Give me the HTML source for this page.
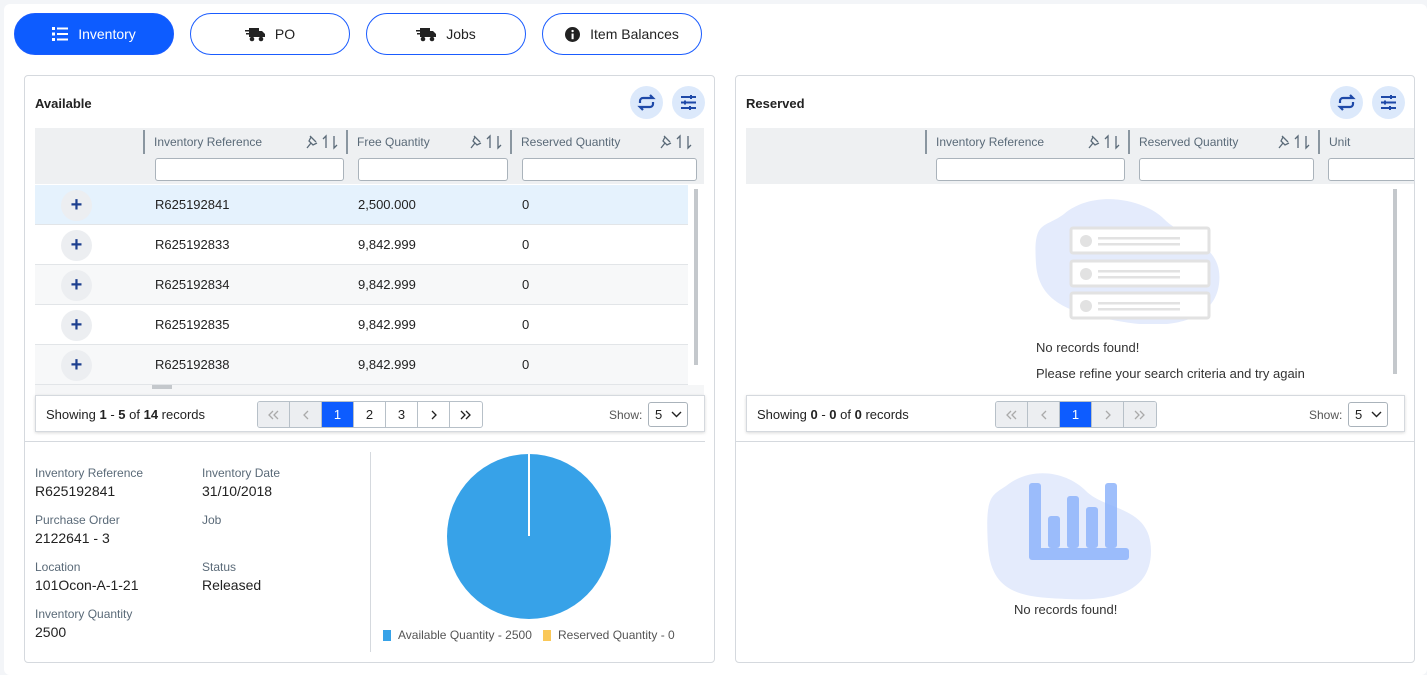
<!DOCTYPE html>
<html><head><style>
*{box-sizing:border-box;margin:0;padding:0}
body{width:1427px;height:675px;background:#f3f5f8;font-family:"Liberation Sans",sans-serif;position:relative;overflow:hidden;color:#222}
.main{position:absolute;left:4px;top:4px;width:1423px;height:671px;background:#fff;border-radius:6px}
.a{position:absolute}
.btn{position:absolute;top:13px;width:160px;height:42px;border:1px solid #1a5cff;border-radius:21px;background:#fff;font-size:14px;display:flex;align-items:center;justify-content:center;gap:10px;color:#222}
.btn.on{background:#0d5cff;color:#fff}
.panel{position:absolute;top:75px;height:588px;border:1px solid #d5d9de;border-radius:4px;background:#fff;overflow:hidden}
.title{position:absolute;left:10px;top:20px;font-size:13px;font-weight:bold;color:#222}
.cb{position:absolute;top:10px;width:33px;height:33px;border-radius:50%;background:#dce9fb}
.th{position:absolute;top:52px;height:56px;background:#eef0f2}
.col{position:absolute;top:2px;height:24px;border-left:2px solid #8a96a0;font-size:12px;color:#5a6a78;padding:5px 0 0 9px}
.ic{position:absolute;right:6px;top:4px}
.inp{position:absolute;top:30px;height:23px;border:1px solid #aab3bb;border-radius:3px;background:#fff}
.row{position:absolute;left:10px;width:653px;height:40px;border-bottom:1px solid #e2e5e8;font-size:13px}
.row span{position:absolute;top:12px}
.plus{position:absolute;left:26px;top:5px;width:31px;height:31px;border-radius:50%;background:#eceef1;color:#1d3f8f;font-weight:bold;font-size:20px;text-align:center;line-height:30px}
.pg{position:absolute;height:37px;border:1px solid #d5d9de;box-shadow:0 1px 3px rgba(0,0,0,.15);background:#fff;font-size:13px}
.pb{position:absolute;top:5px;height:27px;display:flex;border:1px solid #b7c0c8;border-radius:3px;overflow:hidden}
.pb div{width:32px;border-right:1px solid #b7c0c8;text-align:center;line-height:25px;font-size:13px;display:flex;align-items:center;justify-content:center}
.pb div:last-child{border-right:none}
.lbl{position:absolute;font-size:12px;color:#5a6a78}
.val{position:absolute;font-size:14px;color:#222}
</style></head><body>
<div class="main"></div>
<div class="btn on" style="left:14px"><svg width="16" height="14" viewBox="0 0 16 14" fill="#fff"><rect x="0" y="0" width="3" height="3"/><rect x="5" y="0.5" width="11" height="2"/><rect x="0" y="5.5" width="3" height="3"/><rect x="5" y="6" width="11" height="2"/><rect x="0" y="11" width="3" height="3"/><rect x="5" y="11.5" width="11" height="2"/></svg>Inventory</div>
<div class="btn" style="left:190px"><svg width="20" height="16" viewBox="0 0 20 16" fill="#222"><rect x="4" y="2" width="10" height="9"/><path d="M14 5h3l3 3v3h-6z"/><circle cx="7" cy="13" r="2.3"/><circle cx="16" cy="13" r="2.3"/><rect x="0" y="4" width="4" height="1.5"/><rect x="1" y="7" width="3" height="1.5"/></svg>PO</div>
<div class="btn" style="left:366px"><svg width="20" height="16" viewBox="0 0 20 16" fill="#222"><rect x="4" y="2" width="10" height="9"/><path d="M14 5h3l3 3v3h-6z"/><circle cx="7" cy="13" r="2.3"/><circle cx="16" cy="13" r="2.3"/><rect x="0" y="4" width="4" height="1.5"/><rect x="1" y="7" width="3" height="1.5"/></svg>Jobs</div>
<div class="btn" style="left:542px"><svg width="15" height="15" viewBox="0 0 16 16"><circle cx="8" cy="8" r="8" fill="#222"/><rect x="7" y="7" width="2.2" height="6" fill="#fff"/><circle cx="8.1" cy="4.3" r="1.3" fill="#fff"/></svg>Item Balances</div>

<!-- LEFT PANEL -->
<div class="panel" style="left:24px;width:691px">
 <div class="title">Available</div>
 <div class="cb" style="left:605px"><svg width="33" height="33" viewBox="0 0 33 33" fill="none" stroke="#1e49a8" stroke-width="2.2"><path d="M10 17v-2a3 3 0 0 1 3-3h10l-3-3M23 16v2a3 3 0 0 1-3 3H10l3 3"/></svg></div>
 <div class="cb" style="left:647px"><svg width="33" height="33" viewBox="0 0 33 33" stroke="#1e49a8" stroke-width="2"><path d="M9 11h15M9 16.5h15M9 22h15"/><path d="M19 9v4M13 14.5v4M18 20v4"/></svg></div>
 <div class="th" style="left:10px;width:669px">
  <div class="col" style="left:108px;width:203px">Inventory Reference<svg class="ic" width="36" height="16" viewBox="0 0 36 16" fill="none" stroke="#5a6a78" stroke-width="1.3"><path d="M6 2l6 6M7 3l-2 4 4 4 4-2M7 9l-4 5"/><path d="M22 14V2l-3 3M30 2v12l3-3"/></svg></div>
  <div class="col" style="left:311px;width:164px">Free Quantity<svg class="ic" width="36" height="16" viewBox="0 0 36 16" fill="none" stroke="#5a6a78" stroke-width="1.3"><path d="M6 2l6 6M7 3l-2 4 4 4 4-2M7 9l-4 5"/><path d="M22 14V2l-3 3M30 2v12l3-3"/></svg></div>
  <div class="col" style="left:475px;width:190px">Reserved Quantity<svg class="ic" width="36" height="16" viewBox="0 0 36 16" fill="none" stroke="#5a6a78" stroke-width="1.3"><path d="M6 2l6 6M7 3l-2 4 4 4 4-2M7 9l-4 5"/><path d="M22 14V2l-3 3M30 2v12l3-3"/></svg></div>
  <div class="inp" style="left:120px;width:189px"></div>
  <div class="inp" style="left:323px;width:150px"></div>
  <div class="inp" style="left:487px;width:175px"></div>
 </div>
 <div class="row" style="top:109px;background:#e5f2fd"><div class="plus">+</div><span style="left:120px">R625192841</span><span style="left:323px">2,500.000</span><span style="left:487px">0</span></div>
 <div class="row" style="top:149px"><div class="plus">+</div><span style="left:120px">R625192833</span><span style="left:323px">9,842.999</span><span style="left:487px">0</span></div>
 <div class="row" style="top:189px;background:#f7f8f9"><div class="plus">+</div><span style="left:120px">R625192834</span><span style="left:323px">9,842.999</span><span style="left:487px">0</span></div>
 <div class="row" style="top:229px"><div class="plus">+</div><span style="left:120px">R625192835</span><span style="left:323px">9,842.999</span><span style="left:487px">0</span></div>
 <div class="row" style="top:269px;background:#f7f8f9"><div class="plus">+</div><span style="left:120px">R625192838</span><span style="left:323px">9,842.999</span><span style="left:487px">0</span></div>
 <div class="a" style="left:10px;top:309px;width:669px;height:10px;background:#f5f6f7"></div>
 <div class="a" style="left:127px;top:309px;width:20px;height:4px;background:#c4c8cc"></div>
 <div class="a" style="left:669px;top:113px;width:4px;height:176px;background:#c4c8cc"></div>
 <div class="pg" style="left:10px;top:319px;width:670px">
  <span class="a" style="left:10px;top:11px">Showing <b>1</b> - <b>5</b> of <b>14</b> records</span>
  <div class="pb" style="left:221px"><div style="background:#eceef1"><svg width="12" height="10" viewBox="0 0 12 10" fill="none" stroke="#aaa" stroke-width="1.3"><path d="M5 1L1 5l4 4M10 1L6 5l4 4"/></svg></div><div style="background:#eceef1"><svg width="6" height="10" viewBox="0 0 6 10" fill="none" stroke="#aaa" stroke-width="1.3"><path d="M5 1L1 5l4 4"/></svg></div><div style="background:#0d5cff;color:#fff">1</div><div>2</div><div>3</div><div><svg width="6" height="10" viewBox="0 0 6 10" fill="none" stroke="#222" stroke-width="1.3"><path d="M1 1l4 4-4 4"/></svg></div><div><svg width="12" height="10" viewBox="0 0 12 10" fill="none" stroke="#222" stroke-width="1.3"><path d="M1 1l4 4-4 4M6 1l4 4-4 4"/></svg></div></div>
  <span class="a" style="left:573px;top:12px;font-size:12px;color:#555">Show:</span>
  <div class="a" style="left:612px;top:6px;width:40px;height:25px;border:1px solid #aab3bb;border-radius:3px;padding:4px 0 0 6px">5<svg style="position:absolute;right:5px;top:8px" width="11" height="7" viewBox="0 0 11 7" fill="none" stroke="#222" stroke-width="1.4"><path d="M1 1l4.5 4.5L10 1"/></svg></div>
 </div>
 <div class="a" style="left:0;top:365px;width:680px;height:1px;background:#d5d9de"></div>
 <div class="lbl" style="left:10px;top:390px">Inventory Reference</div><div class="val" style="left:10px;top:407px">R625192841</div>
 <div class="lbl" style="left:177px;top:390px">Inventory Date</div><div class="val" style="left:177px;top:407px">31/10/2018</div>
 <div class="lbl" style="left:10px;top:437px">Purchase Order</div><div class="val" style="left:10px;top:454px">2122641 - 3</div>
 <div class="lbl" style="left:177px;top:437px">Job</div>
 <div class="lbl" style="left:10px;top:484px">Location</div><div class="val" style="left:10px;top:501px">101Ocon-A-1-21</div>
 <div class="lbl" style="left:177px;top:484px">Status</div><div class="val" style="left:177px;top:501px">Released</div>
 <div class="lbl" style="left:10px;top:531px">Inventory Quantity</div><div class="val" style="left:10px;top:548px">2500</div>
 <div class="a" style="left:345px;top:376px;width:1px;height:200px;background:#d5d9de"></div>
 <div class="a" style="left:422px;top:378px;width:164px;height:165px;border-radius:50%;background:#37a2e8"></div>
 <div class="a" style="left:503px;top:378px;width:2px;height:82px;background:#fff"></div>
 <div class="a" style="left:358px;top:554px;width:8px;height:11px;background:#37a2e8"></div>
 <div class="a" style="left:373px;top:552px;font-size:12px;color:#555">Available Quantity - 2500</div>
 <div class="a" style="left:518px;top:554px;width:8px;height:11px;background:#fac858"></div>
 <div class="a" style="left:533px;top:552px;font-size:12px;color:#555">Reserved Quantity - 0</div>
</div>

<!-- RIGHT PANEL -->
<div class="panel" style="left:735px;width:680px">
 <div class="title">Reserved</div>
 <div class="cb" style="left:594px"><svg width="33" height="33" viewBox="0 0 33 33" fill="none" stroke="#1e49a8" stroke-width="2.2"><path d="M10 17v-2a3 3 0 0 1 3-3h10l-3-3M23 16v2a3 3 0 0 1-3 3H10l3 3"/></svg></div>
 <div class="cb" style="left:636px"><svg width="33" height="33" viewBox="0 0 33 33" stroke="#1e49a8" stroke-width="2"><path d="M9 11h15M9 16.5h15M9 22h15"/><path d="M19 9v4M13 14.5v4M18 20v4"/></svg></div>
 <div class="th" style="left:10px;width:669px">
  <div class="col" style="left:179px;width:203px">Inventory Reference<svg class="ic" width="36" height="16" viewBox="0 0 36 16" fill="none" stroke="#5a6a78" stroke-width="1.3"><path d="M6 2l6 6M7 3l-2 4 4 4 4-2M7 9l-4 5"/><path d="M22 14V2l-3 3M30 2v12l3-3"/></svg></div>
  <div class="col" style="left:382px;width:190px">Reserved Quantity<svg class="ic" width="36" height="16" viewBox="0 0 36 16" fill="none" stroke="#5a6a78" stroke-width="1.3"><path d="M6 2l6 6M7 3l-2 4 4 4 4-2M7 9l-4 5"/><path d="M22 14V2l-3 3M30 2v12l3-3"/></svg></div>
  <div class="col" style="left:572px;width:97px">Unit</div>
  <div class="inp" style="left:190px;width:189px"></div>
  <div class="inp" style="left:393px;width:175px"></div>
  <div class="inp" style="left:582px;width:100px"></div>
 </div>
 <div class="a" style="left:657px;top:113px;width:4px;height:185px;background:#c4c8cc"></div>
 <svg class="a" style="left:298px;top:118px" width="190" height="130" viewBox="0 0 190 130">
  <path d="M30 20C60 -5 110 5 130 25S190 50 185 90S130 135 90 128S5 115 2 70S10 35 30 20Z" fill="#e4ebfc"/>
  <g fill="#fff" stroke="#e2e2e2" stroke-width="3"><rect x="37" y="34" width="138" height="25" rx="2"/><rect x="37" y="67" width="138" height="25" rx="2"/><rect x="37" y="99" width="138" height="25" rx="2"/></g>
  <g fill="#e2e2e2"><circle cx="52" cy="47" r="6"/><circle cx="52" cy="80" r="6"/><circle cx="52" cy="112" r="6"/><rect x="64" y="43" width="82" height="2.5"/><rect x="64" y="49" width="82" height="2.5"/><rect x="64" y="76" width="82" height="2.5"/><rect x="64" y="82" width="82" height="2.5"/><rect x="64" y="108" width="82" height="2.5"/><rect x="64" y="114" width="82" height="2.5"/></g>
 </svg>
 <div class="a" style="left:300px;top:264px;font-size:13px;color:#333">No records found!</div>
 <div class="a" style="left:300px;top:290px;font-size:13px;color:#333">Please refine your search criteria and try again</div>
 <div class="pg" style="left:10px;top:319px;width:659px">
  <span class="a" style="left:10px;top:11px">Showing <b>0</b> - <b>0</b> of <b>0</b> records</span>
  <div class="pb" style="left:248px"><div style="background:#eceef1"><svg width="12" height="10" viewBox="0 0 12 10" fill="none" stroke="#aaa" stroke-width="1.3"><path d="M5 1L1 5l4 4M10 1L6 5l4 4"/></svg></div><div style="background:#eceef1"><svg width="6" height="10" viewBox="0 0 6 10" fill="none" stroke="#aaa" stroke-width="1.3"><path d="M5 1L1 5l4 4"/></svg></div><div style="background:#0d5cff;color:#fff">1</div><div style="background:#eceef1"><svg width="6" height="10" viewBox="0 0 6 10" fill="none" stroke="#aaa" stroke-width="1.3"><path d="M1 1l4 4-4 4"/></svg></div><div style="background:#eceef1"><svg width="12" height="10" viewBox="0 0 12 10" fill="none" stroke="#aaa" stroke-width="1.3"><path d="M1 1l4 4-4 4M6 1l4 4-4 4"/></svg></div></div>
  <span class="a" style="left:562px;top:12px;font-size:12px;color:#555">Show:</span>
  <div class="a" style="left:601px;top:6px;width:40px;height:25px;border:1px solid #aab3bb;border-radius:3px;padding:4px 0 0 6px">5<svg style="position:absolute;right:5px;top:8px" width="11" height="7" viewBox="0 0 11 7" fill="none" stroke="#222" stroke-width="1.4"><path d="M1 1l4.5 4.5L10 1"/></svg></div>
 </div>
 <div class="a" style="left:0;top:365px;width:680px;height:1px;background:#d5d9de"></div>
 <svg class="a" style="left:250px;top:395px" width="170" height="130" viewBox="0 0 170 130">
  <path d="M20 15C45 -5 80 0 100 20S165 35 165 80S120 130 80 128S5 125 2 75S5 25 20 15Z" fill="#e4ebfc"/>
  <g fill="#8fb4fb" opacity=".85"><rect x="43" y="12" width="12" height="76" rx="3"/><rect x="43" y="77" width="100" height="12" rx="3"/><rect x="62" y="45" width="12" height="32" rx="3"/><rect x="81" y="25" width="12" height="52" rx="3"/><rect x="100" y="36" width="12" height="41" rx="3"/><rect x="119" y="12" width="12" height="65" rx="3"/></g>
 </svg>
 <div class="a" style="left:278px;top:526px;font-size:13px;color:#333">No records found!</div>
</div>
</body></html>
